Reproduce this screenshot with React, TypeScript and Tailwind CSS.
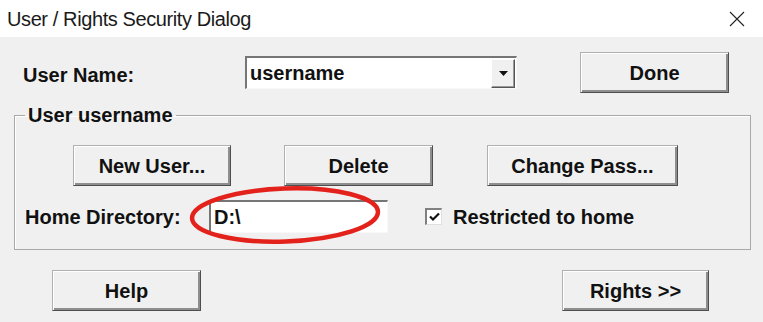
import React from "react";

const raised =
  "flex items-center justify-center bg-[#f0f0f0] border border-t-[#b0b0b0] border-l-[#b0b0b0] border-r-[#4e4e4e] border-b-[#4e4e4e] shadow-[inset_1px_1px_0_#fff,inset_-2px_-2px_0_#8e8e8e] text-[20px] font-bold text-[#111] leading-none";

const sunken =
  "bg-white border-t-2 border-l-2 border-b border-r border-t-[#767676] border-l-[#767676] border-b-[#f8f8f8] border-r-[#f8f8f8]";

const Btn = ({ label, w }: { label: string; w: string }) => (
  <button type="button" className={`${raised} ${w} h-[41px]`}>
    {label}
  </button>
);

const App = () => {
  return (
    <div
      className="w-[763px] h-[322px] overflow-hidden bg-[#f0f0f0] text-[#111]"
      style={{ fontFamily: '"Liberation Sans", Arial, sans-serif' }}
    >
      {/* title bar */}
      <div className="h-[37px] bg-white flex items-center justify-between pl-[7px] pr-[18px]">
        <span className="text-[20px] tracking-[-0.4px] text-[#1a1a1a] leading-none">
          User / Rights Security Dialog
        </span>
        <svg width="16" height="16" viewBox="0 0 16 16" className="mt-[1px]">
          <path d="M1 1 L15 15 M15 1 L1 15" stroke="#222" strokeWidth="1.1" fill="none" />
        </svg>
      </div>

      <div className="flex flex-col pt-[15px]">
        {/* user name row */}
        <div className="flex items-center h-[41px] pl-[23px]">
          <span className="w-[222px] text-[20px] font-bold leading-none pt-[4px]">User Name:</span>
          <div className={`${sunken} w-[272px] h-[33px] flex items-center`}>
            <span className="flex-1 pl-[3px] text-[20px] font-bold leading-none">username</span>
            <div className="w-[24px] h-[29px] mr-[1px] bg-[#f0f0f0] border border-t-[#fff] border-l-[#fff] border-r-[#555] border-b-[#555] shadow-[inset_-1px_-1px_0_#999] flex items-center justify-center">
              <svg width="9" height="5" viewBox="0 0 9 5">
                <path d="M0 0 L9 0 L4.5 5 Z" fill="#111" />
              </svg>
            </div>
          </div>
          <div className="ml-[63px]">
            <Btn label="Done" w="w-[149px]" />
          </div>
        </div>

        {/* group box */}
        <fieldset className="mt-[10px] ml-[14px] w-[737px] border border-[#a8a8a8] shadow-[inset_1px_1px_0_#fff] pt-[18px] pb-[16px]">
          <legend className="ml-[10px] px-[3px] text-[20px] font-bold leading-[24px]">User username</legend>
          <div className="flex items-center pl-[58px]">
            <Btn label="New User..." w="w-[158px]" />
            <div className="ml-[53px]">
              <Btn label="Delete" w="w-[149px]" />
            </div>
            <div className="ml-[54px]">
              <Btn label="Change Pass..." w="w-[191px]" />
            </div>
          </div>
          <div className="flex items-center mt-[14px] h-[33px] pl-[10px]">
            <span className="w-[184px] text-[20px] font-bold leading-none">Home Directory:</span>
            <div className="relative">
              <div className={`${sunken} w-[179px] h-[33px] flex items-center pl-[3px] text-[20px] font-bold leading-none`}>
                D:\
              </div>
              <svg
                className="absolute left-[-22px] top-[-17px] pointer-events-none"
                width="196"
                height="64"
                viewBox="0 0 196 64"
              >
                <ellipse
                  cx="98"
                  cy="32"
                  rx="93"
                  ry="26.5"
                  fill="none"
                  stroke="#e3221c"
                  strokeWidth="4.5"
                  transform="rotate(-2 98 32)"
                />
              </svg>
            </div>
            <div className="ml-[37px] w-[17px] h-[17px] bg-white border-t-2 border-l-2 border-b border-r border-t-[#808080] border-l-[#808080] border-b-[#e0e0e0] border-r-[#e0e0e0] flex items-center justify-center">
              <svg width="11" height="10" viewBox="0 0 11 10">
                <path d="M1 4.5 L4 7.5 L10 1.5" stroke="#111" strokeWidth="2.2" fill="none" />
              </svg>
            </div>
            <span className="ml-[11px] text-[20px] font-bold leading-none">Restricted to home</span>
          </div>
        </fieldset>

        {/* bottom row */}
        <div className="flex items-center mt-[20px] pl-[52px]">
          <Btn label="Help" w="w-[149px]" />
          <div className="ml-[361px]">
            <Btn label="Rights >>" w="w-[147px]" />
          </div>
        </div>
      </div>
    </div>
  );
};

export default App;
